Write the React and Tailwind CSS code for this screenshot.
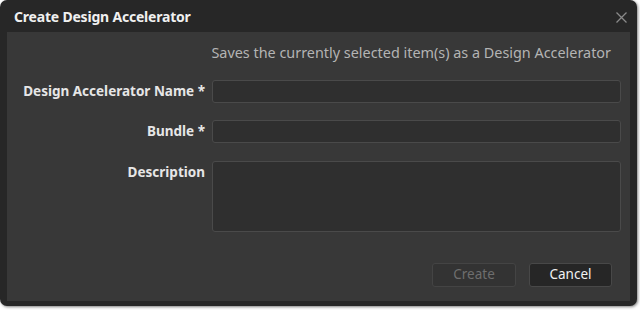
import React from 'react';

const font = { fontFamily: '"Noto Sans", "Open Sans", sans-serif' };

function Field({ label, tall, className = '' }) {
    return (
        <div className={`flex items-start ${className}`}>
            <label className="w-[205px] shrink-0 pr-[7px] pt-[1px] text-right text-[13.5px] font-bold text-[#e6e6e6]">
                {label}
            </label>
            <div className={`w-[409px] rounded-[3px] border border-[#4a4a4a] bg-[#2f2f2f] ${tall ? 'h-[71px]' : 'h-[23px]'}`}></div>
        </div>
    );
}

export default function App() {
    return (
        <div className="w-[640px] h-[312px] bg-white" style={font}>
            <div className="w-[637px] h-[306px] rounded-[7px] bg-[#272727] flex flex-col shadow-[1px_1px_3px_rgba(0,0,0,0.5)]">
                {/* title bar */}
                <div className="h-[32px] shrink-0 flex items-center justify-between pl-[14px] pr-[10px]">
                    <span className="text-[14px] font-bold text-[#f0f0f0] tracking-[-0.2px]">Create Design Accelerator</span>
                    <svg width="11" height="11" viewBox="0 0 11 11" className="mt-[3px]">
                        <path d="M0.5 0.5L10.5 10.5M10.5 0.5L0.5 10.5" stroke="#8a8a8a" strokeWidth="1.3" />
                    </svg>
                </div>

                {/* body */}
                <div className="mx-[7px] mb-[5px] flex-1 bg-[#383838] flex flex-col">
                    <div className="pt-[10px] pr-[19px] text-right text-[14.4px] text-[#b4b4b4]">
                        Saves the currently selected item(s) as a Design Accelerator
                    </div>
                    <div className="mt-[16px] flex flex-col gap-[17px]">
                        <Field label="Design Accelerator Name *" />
                        <Field label="Bundle *" />
                        <Field label="Description" tall className="mt-[1px]" />
                    </div>
                    <div className="mt-[31px] flex justify-end gap-[13px] pr-[18px]">
                        <button className="w-[84px] h-[24px] rounded-[3px] border border-[#444] bg-[#333] text-[13.5px] text-[#6e6e6e]">Create</button>
                        <button className="w-[83px] h-[24px] rounded-[3px] border border-[#484848] bg-[#262626] text-[13.5px] text-[#f2f2f2]">Cancel</button>
                    </div>
                </div>
            </div>
        </div>
    );
}
